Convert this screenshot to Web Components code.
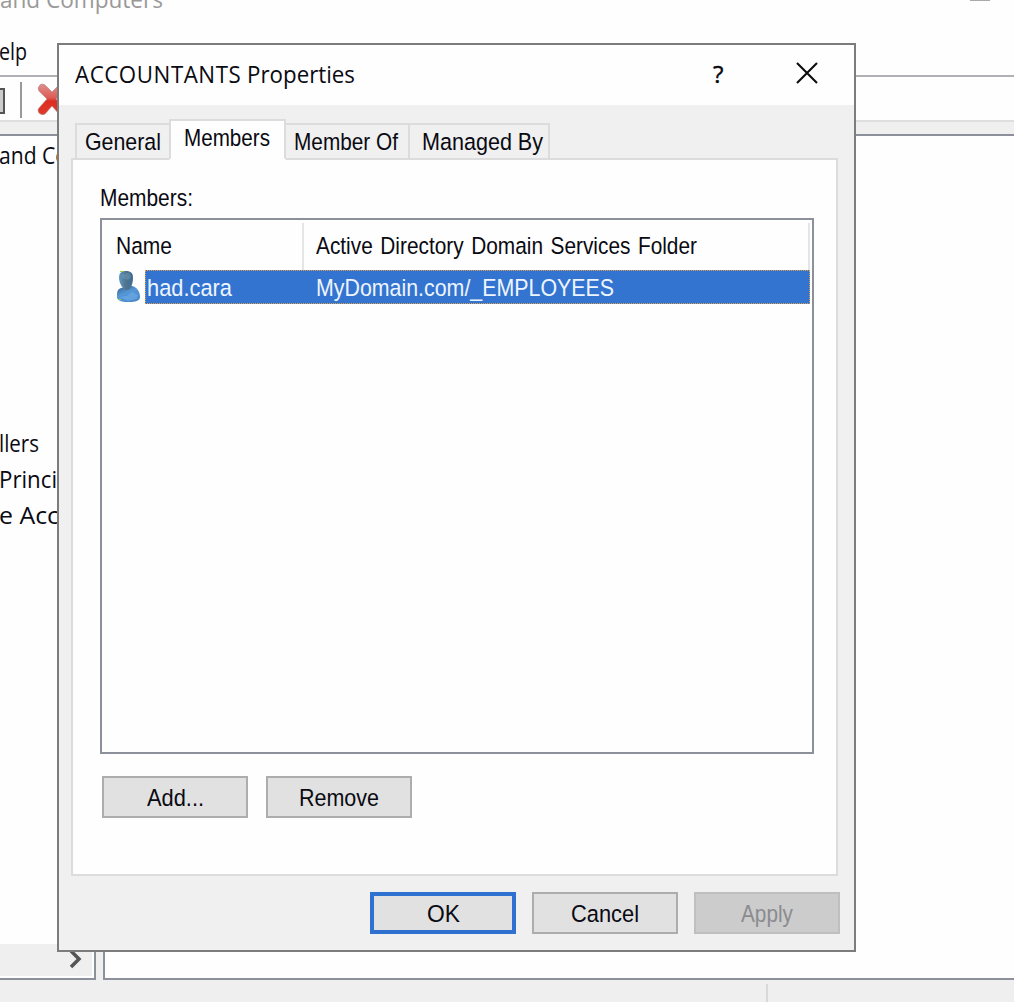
<!DOCTYPE html>
<html lang="en">
<head>
<meta charset="utf-8">
<title>ACCOUNTANTS Properties</title>
<style>
html,body{margin:0;height:100%;overflow:hidden;background:#fefefe}
</style>
</head>
<body>
<console-desktop></console-desktop>
<script>
function define(name, html, setup) {
  const t = document.createElement('template');
  t.innerHTML = html;
  customElements.define(name, class extends HTMLElement {
    connectedCallback() {
      if (this.shadowRoot) return;
      this.attachShadow({mode: 'open'}).appendChild(t.content.cloneNode(true));
      if (setup) setup(this, this.shadowRoot);
    }
  });
}

/* A line of text condensed or stretched to the width in its "w" attribute. */
define('fit-text', `<style>
:host{display:block;flex:none;height:28px;line-height:28px;white-space:nowrap;font-family:"Liberation Sans",Arial,sans-serif;font-size:24.5px;color:#0a0a12}
:host([ui]){font-family:"Open Sans","Noto Sans",sans-serif;font-size:24px}
:host([muted]){color:#999}
:host([light]){color:#eef4fd}
:host([off]){color:#8b8b8f}
span{display:inline-block;transform-origin:0 0}
</style><span><slot></slot></span>`, (el, root) => {
  const span = root.querySelector('span'), w = +el.getAttribute('w');
  el.style.width = w + 'px';
  span.style.transform = `scaleX(${w / span.getBoundingClientRect().width})`;
});

define('push-button', `<style>
:host{display:flex;box-sizing:border-box;width:146px;height:42px;flex:none;justify-content:center;align-items:flex-start;padding-top:6px;border:2px solid #adadad;background:#e1e1e1}
:host([primary]){border:4px solid #2f71d0;padding-top:4px}
:host([disabled]){border-color:#bfbfbf;background:#ccc}
</style><slot></slot>`);

define('tab-item', `<style>
:host{display:block;box-sizing:border-box;flex:none;height:37px;border:2px solid #dcdcdc;border-left-width:0;background:#f0f0f0;padding:3px 0 0 var(--pad)}
:host([first]){border-left-width:2px}
:host([active]){height:41px;border-left-width:2px;background:#fefefe;border-bottom-color:#fefefe;margin-left:-2px}
</style><slot></slot>`);

define('user-icon', `<style>:host{display:block;flex:none;width:25px;height:34px}svg{display:block}</style>
<svg width="25" height="34" viewBox="0 0 25 34"><defs>
<linearGradient id="h" x1="0" x2="1"><stop offset="0" stop-color="#5d9bc8"/><stop offset=".45" stop-color="#52758f"/><stop offset="1" stop-color="#3e6c96"/></linearGradient>
<linearGradient id="b" x1="0" y1="0" x2=".6" y2="1"><stop offset="0" stop-color="#365f87"/><stop offset=".5" stop-color="#5698d7"/><stop offset="1" stop-color="#4688c9"/></linearGradient></defs>
<path d="M1 25c0-4 1-6 4-7l4-1 7-1c5 1 8 6 8 11 0 4-5 5-11 5-5 0-10 0-12-4z" fill="url(#b)"/>
<path d="M3 8c0-5 2-7 7-7 5 0 7 2 7 7s-2 12-6 12S3 13 3 8z" fill="url(#h)"/>
<path d="M6 4l7-1 2 4-3 3-6-2z" fill="#7497b0" opacity=".5"/>
<path d="M4 27l7-1 5-4 6 3-1 4-9 2z" fill="#6eace8" opacity=".65"/>
<path d="M4 1h3v1H4zM3 29h2v1H3z" fill="#9bd32e"/></svg>`);

define('member-list', `<style>
:host{display:flex;flex-direction:column;box-sizing:border-box;width:714px;height:536px;border:2px solid #8b909b;background:#fefefe}
.head{display:flex;height:47px;margin-top:3px}
.c{box-sizing:border-box;height:47px;border-right:2px solid #e5e5e5;padding-top:9px}
.c1{width:202px;padding-left:14px}.c2{width:506px;padding-left:12px}
.row{display:flex;height:34px;padding-left:14px}
.sel{display:flex;box-sizing:border-box;width:665px;margin-left:4px;background:#3374d1;border:1px dotted #e0a050;padding:3px 0 0 1px}
.sel :last-child{margin-left:84px}
</style>
<div class="head"><div class="c c1"><fit-text w="56">Name</fit-text></div><div class="c c2"><fit-text w="381" style="word-spacing:2px">Active Directory Domain Services Folder</fit-text></div></div>
<div class="row"><user-icon></user-icon><div class="sel"><fit-text light w="85">had.cara</fit-text><fit-text light w="298">MyDomain.com/_EMPLOYEES</fit-text></div></div>`);

define('properties-dialog', `<style>
:host{display:flex;flex-direction:column;box-sizing:border-box;width:799px;height:909px;border:2px solid #7c7c7c;background:#f0f0f0}
.title{display:flex;height:60px;background:#fefefe;box-sizing:border-box;padding:15px 0 0 16px}
.wide{letter-spacing:.6px}
.q{margin-left:358px}
.title svg{margin:2px 0 0 72px}
.tabs{display:flex;align-items:flex-end;height:41px;padding-left:16px;margin-top:14px;position:relative;z-index:1}
.panel{box-sizing:border-box;width:767px;height:718px;margin:-2px 0 0 12px;border:2px solid #dcdcdc;background:#fefefe;padding:24px 0 0 27px}
.panel>fit-text{margin-bottom:6px}
.btns{display:flex;gap:18px;margin:22px 0 0 2px}
.foot{display:flex;gap:16px;justify-content:flex-end;padding:16px 14px 0 0}
</style>
<div class="title"><fit-text ui w="280"><span class="wide">ACCOUNTANTS</span> Properties</fit-text><fit-text ui class="q" w="10.5" style="-webkit-text-stroke:.4px">?</fit-text>
<svg width="22" height="22" viewBox="0 0 22 22"><path d="M1 1l20 20M21 1L1 21" stroke="#0c0c0c" stroke-width="2.1"/></svg></div>
<div class="tabs">
<tab-item first style="width:96px;--pad:8px"><fit-text w="76">General</fit-text></tab-item>
<tab-item active style="width:117px;--pad:13px"><fit-text w="86">Members</fit-text></tab-item>
<tab-item style="width:124px;--pad:8px"><fit-text w="104">Member Of</fit-text></tab-item>
<tab-item style="width:140px;--pad:12px"><fit-text w="121">Managed By</fit-text></tab-item>
</div>
<div class="panel"><fit-text w="93">Members:</fit-text><member-list></member-list>
<div class="btns"><push-button><fit-text w="57">Add...</fit-text></push-button><push-button><fit-text w="80">Remove</fit-text></push-button></div></div>
<div class="foot"><push-button primary><fit-text w="33">OK</fit-text></push-button><push-button><fit-text w="68">Cancel</fit-text></push-button><push-button disabled><fit-text off w="52">Apply</fit-text></push-button></div>`);

define('console-desktop', `<style>
:host{display:flex;flex-direction:column;width:1014px;height:1002px;overflow:hidden;position:relative;background:#fefefe}
.caption{display:flex;height:37px;justify-content:space-between}
.caption fit-text{margin-top:-15px}
.caption i{width:20px;height:1px;background:#aaa;margin-right:24px}
.menu{height:38px;box-sizing:border-box}
.menu fit-text{margin-left:-1px}
.tools{display:flex;box-sizing:border-box;height:47px;border-top:2px solid #b1b1b5;border-bottom:2px solid #dedede}
.grid{box-sizing:border-box;width:5px;height:26px;margin-top:11px;border:2px solid #555;border-left:0;background:#ccc}
.sep{width:2px;height:36px;margin:5px 0 0 15px;background:#999}
.tools svg{margin:6px 0 0 14px}
.gap{height:12px;background:#efefef}
.work{display:flex;height:846px;background:#efefef;gap:7px}
.tree{display:flex;flex-direction:column;box-sizing:border-box;width:96px;border:2px solid #8b909b;border-left:0;background:#fefefe;overflow:hidden}
.items{flex:1;overflow:hidden;padding-top:5px}
.items .gap1{margin-top:260px}.items .n{margin-top:8px}
.items fit-text{margin-left:-1px}
.scroll{height:32px;width:92px;background:#efefef;margin-bottom:2px}
.scroll svg{display:block;margin-left:68px}
.view{flex:1;box-sizing:border-box;border:2px solid #8b909b;border-right:0;background:#fefefe}
.status{height:22px;background:#efefef;display:flex}
.status i{width:2px;height:19px;margin:4px 0 0 766px;background:#d9d9d9}
properties-dialog{position:absolute;left:57px;top:43px}
</style>
<div class="caption"><fit-text ui muted w="163">and Computers</fit-text><i></i></div>
<div class="menu"><fit-text ui w="28">elp</fit-text></div>
<div class="tools"><div class="grid"></div><div class="sep"></div>
<svg width="32" height="36" viewBox="0 0 32 36"><defs><linearGradient id="r" x1="0" y1="0" x2="0" y2="1"><stop offset="0" stop-color="#e09090"/><stop offset=".45" stop-color="#dc5b55"/><stop offset=".55" stop-color="#dc2d20"/><stop offset="1" stop-color="#e03a2a"/></linearGradient></defs>
<path d="M4 2q2-2 5 0l7 7 7-7 5 5-8 9 8 10-5 5-7-8-7 8q-3 2-6-1-2-3 0-5l8-9-8-8q-2-3 1-6z" fill="url(#r)" stroke="#b98480" stroke-width=".7"/></svg></div>
<div class="gap"></div>
<div class="work"><div class="tree"><div class="items"><fit-text ui w="69">and Co</fit-text><fit-text ui class="gap1" w="40">llers</fit-text><fit-text ui class="n" w="58">Princi</fit-text><fit-text ui class="n" w="60">e Acc</fit-text></div>
<div class="scroll"><svg width="20" height="30" viewBox="0 0 20 30"><path d="M3 7l8 8-8 8" fill="none" stroke="#555" stroke-width="3.5"/></svg></div></div><div class="view"></div></div>
<div class="status"><i></i></div>
<properties-dialog></properties-dialog>`);
</script>
</body>
</html>
